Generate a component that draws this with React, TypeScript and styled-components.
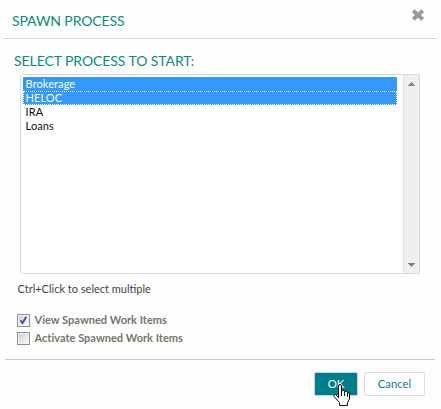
import React, { useState } from "react";
import styled, { createGlobalStyle } from "styled-components";

const GlobalStyle = createGlobalStyle`
  * { box-sizing: border-box; }
  body { margin: 0; background: #fefefe; font-family: Lato, sans-serif; }
`;

const Dialog = styled.section`
  width: 441px;
  height: 409px;
  background: #fefefe;
  display: flex;
  flex-direction: column;
  overflow: hidden;
`;

const Header = styled.header`
  height: 39px;
  margin: 0 4px 0 3px;
  padding: 0 13px 0 9px;
  border-bottom: 1px solid #d6d6d6;
  display: flex;
  justify-content: space-between;
`;

const Title = styled.h1`
  margin: 11px 0 0;
  font-size: 14px;
  font-weight: 400;
  line-height: 20px;
  letter-spacing: -0.1px;
  color: #078d79;
  white-space: nowrap;
`;

const CloseButton = styled.button`
  margin: 9px 0 0;
  padding: 0;
  width: 12px;
  height: 12px;
  border: 0;
  background: none;
  display: block;
  svg { display: block; }
`;

const Body = styled.main`
  height: 320px;
  padding: 12px 20px 0 14px;
`;

const Heading = styled.h2`
  margin: 0;
  height: 23px;
  font-size: 14px;
  font-weight: 400;
  line-height: 20px;
  letter-spacing: -0.08px;
  color: #078d79;
  white-space: nowrap;
`;

const ListBox = styled.div`
  width: 400px;
  height: 200px;
  margin-left: 6px;
  border: 1px solid #d9d9d9;
  border-radius: 3px 0 0 3px;
  display: flex;
  background: #fff;
`;

const Options = styled.ul`
  flex: 1;
  list-style: none;
  margin: 0;
  padding: 2px 6px 0 2px;
`;

const Option = styled.li<{ $selected?: boolean; $focused?: boolean }>`
  height: 14px;
  padding-left: 2.6px;
  font-size: 11px;
  line-height: 14px;
  letter-spacing: 0.08px;
  color: ${(p) => (p.$selected ? "#fff" : "#111")};
  background: ${(p) => (p.$selected ? "#3399ff" : "transparent")};
  ${(p) => p.$focused && "border: 1px dotted #fff; padding-left: 1.6px; line-height: 12px;"}
`;

const ScrollBar = styled.div`
  width: 16px;
  background: #efefef;
  border-left: 1px solid #dedede;
  display: flex;
  flex-direction: column;
  justify-content: space-between;
  align-items: center;
  padding: 7px 0 6px;
  svg { display: block; }
`;

const Hint = styled.p`
  margin: 7px 0 0 3.5px;
  font-size: 11px;
  line-height: 16px;
  color: #444;
  white-space: nowrap;
`;

const Checks = styled.div`
  margin: 15px 0 0 3px;
  display: flex;
  flex-direction: column;
`;

const CheckRow = styled.label`
  height: 18px;
  display: flex;
  gap: 4.5px;
  font-size: 11px;
  font-weight: 700;
  line-height: 16px;
  letter-spacing: 0.02px;
  color: #777568;
  white-space: nowrap;
`;

const CheckBox = styled.span`
  width: 13px;
  height: 13px;
  margin-top: 2px;
  border: 1px solid #8e8f8f;
  background: linear-gradient(135deg, #c9cdd3, #f6f6f6 85%);
  box-shadow: inset 0 0 0 1px #f4f4f4;
  display: block;
  svg { display: block; }
`;

const Footer = styled.footer`
  margin: 0 6px 0 5px;
  padding: 12px 10px 0 0;
  border-top: 1px solid #cbcbcb;
  display: flex;
  justify-content: flex-end;
  gap: 6px;
`;

const Button = styled.button<{ $primary?: boolean }>`
  position: relative;
  width: ${(p) => (p.$primary ? 44 : 61)}px;
  height: 24px;
  padding: 0;
  border: 1px solid ${(p) => (p.$primary ? "#b7d9dc" : "#dcdcdc")};
  border-radius: 2px;
  background: ${(p) => (p.$primary ? "#007d8a" : "#fff")};
  color: ${(p) => (p.$primary ? "#fff" : "#0b7c88")};
  font: 400 11.3px/22px Lato, sans-serif;
`;

const Cursor = styled.svg`
  position: absolute;
  left: 18px;
  top: 11px;
  pointer-events: none;
`;

const processes = ["Brokerage", "HELOC", "IRA", "Loans"];

function Arrow({ down }: { down?: boolean }) {
  return (
    <svg width="8" height="4" shapeRendering="crispEdges">
      <path d={down ? "M0 0h7v1h-1v1h-1v1h-1v1h-1v-1h-1v-1h-1v-1h-1z" : "M3 0h1v1h1v1h1v1h1v1h-7v-1h1v-1h1v-1h1z"} fill="#858585" />
    </svg>
  );
}

export default function App() {
  const [checked, setChecked] = useState([true, false]);
  return (
    <>
      <GlobalStyle />
      <Dialog>
        <Header>
          <Title>SPAWN PROCESS</Title>
          <CloseButton aria-label="Close">
            <svg width="12" height="12" viewBox="0 0 12 12">
              <path d="M2.7 3L9.3 9M9.3 3L2.7 9" stroke="#999" strokeWidth="4" strokeLinecap="square" />
            </svg>
          </CloseButton>
        </Header>
        <Body>
          <Heading>SELECT PROCESS TO START:</Heading>
          <ListBox>
            <Options>
              {processes.map((name, i) => (
                <Option key={name} $selected={i < 2} $focused={i === 1}>{name}</Option>
              ))}
            </Options>
            <ScrollBar><Arrow /><Arrow down /></ScrollBar>
          </ListBox>
          <Hint>Ctrl+Click to select multiple</Hint>
          <Checks>
            {["View Spawned Work Items", "Activate Spawned Work Items"].map((label, i) => (
              <CheckRow key={label} onClick={() => setChecked(checked.map((c, j) => (j === i ? !c : c)))}>
                <CheckBox>
                  {checked[i] && (
                    <svg width="11" height="11" viewBox="0 0 11 11">
                      <path d="M2.5 5.2L4.5 8L8.3 1.8" fill="none" stroke="#3d559e" strokeWidth="1.9" />
                    </svg>
                  )}
                </CheckBox>
                {label}
              </CheckRow>
            ))}
          </Checks>
        </Body>
        <Footer>
          <Button $primary>
            OK
            <Cursor width="18" height="23" viewBox="0 0 18 23">
              <path d="M5.5 14V2Q5.5.5 7 .5T8.5 2V7Q10.5 5.5 11.5 7.5Q13.5 6.5 14.3 8.5Q16.5 8 16.5 10V15L14.5 18.5V21.5H6.5V18.5L1 12.5Q.5 10.5 2.5 10.5L5.5 13.5" fill="#fff" stroke="#111" />
              <path d="M8.5 7v5M11.5 8v4M14.5 9v4" stroke="#111" />
            </Cursor>
          </Button>
          <Button>Cancel</Button>
        </Footer>
      </Dialog>
    </>
  );
}
